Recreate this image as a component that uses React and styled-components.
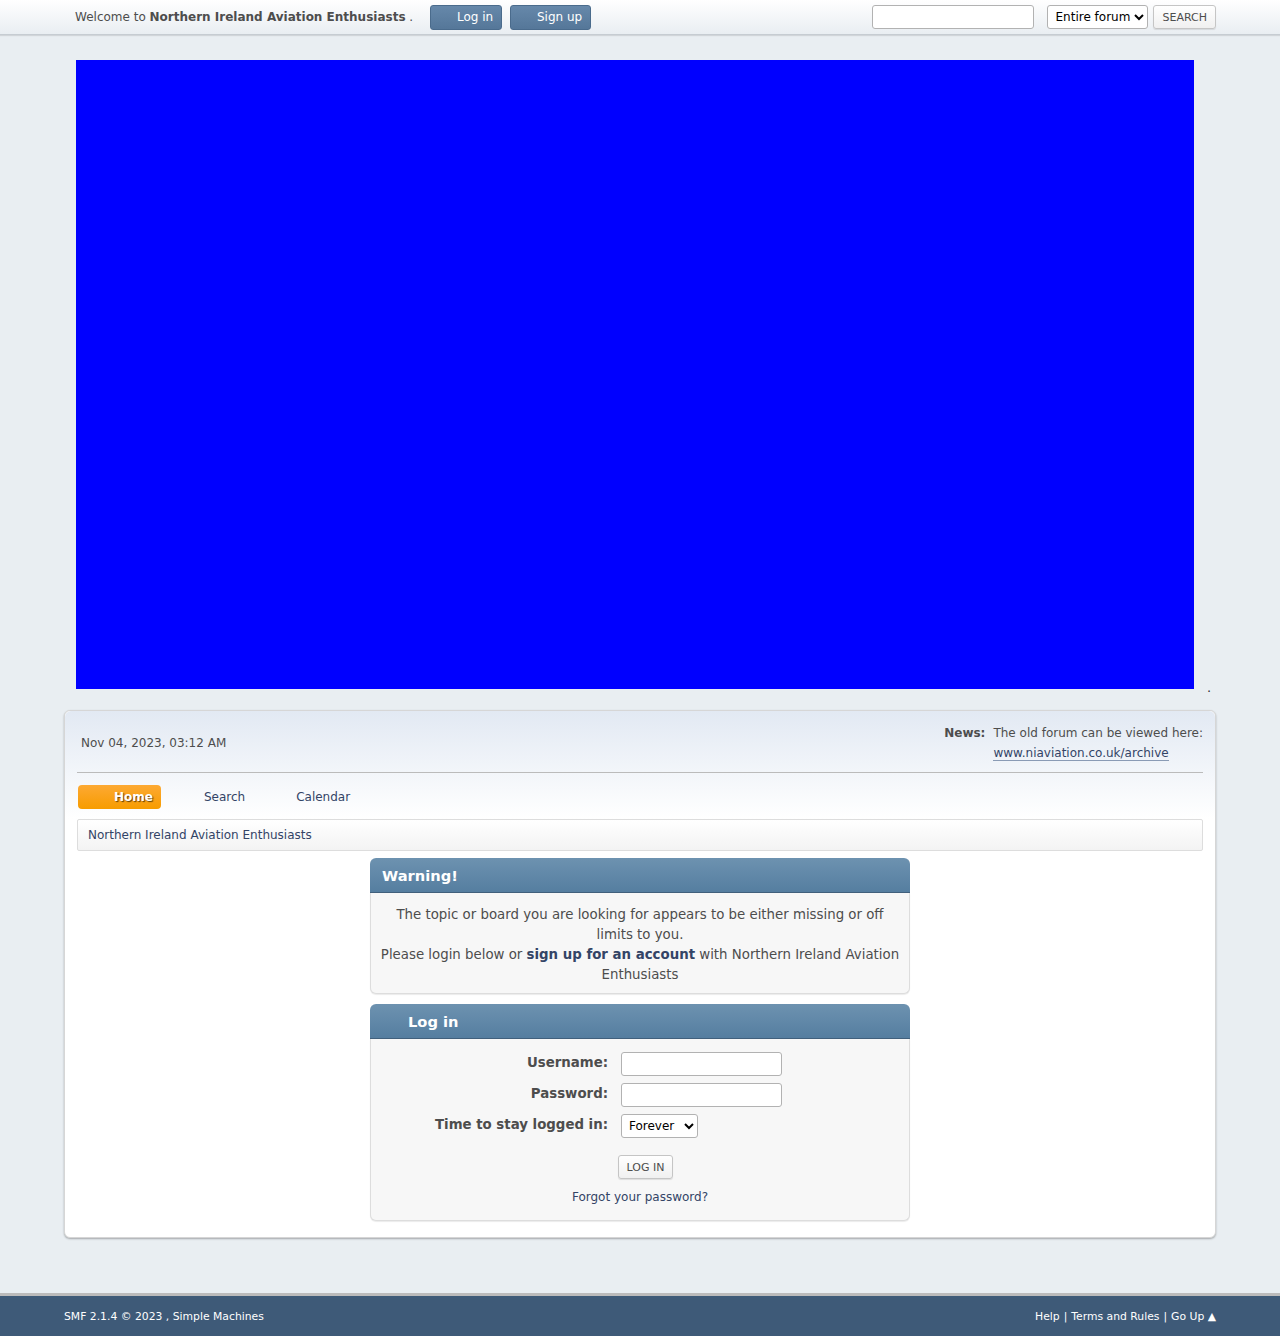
import React from 'react';
import styled, { createGlobalStyle } from 'styled-components';

const GlobalStyle = createGlobalStyle`
  body {
    margin: 0;
    background: #e9eef2;
    font-family: "DejaVu Sans", Verdana, sans-serif;
    font-size: 12px;
    color: #4d4d4d;
  }
  a {
    color: #334466;
    text-decoration: none;
  }
`;

const TopSection = styled.div`
  height: 35px;
  box-sizing: border-box;
  background: linear-gradient(to bottom, #fff 0%, #e9eef2 100%);
  border-bottom: 1px solid #c6ccd2;
  box-shadow: 0 1px 1px rgba(0, 0, 0, 0.1);
`;

const Inner = styled.div`
  width: 1152px;
  margin: 0 auto;
  box-sizing: border-box;
`;

const TopRow = styled(Inner)`
  height: 34px;
  display: flex;
  align-items: center;
  padding-left: 11px;
`;

const Welcome = styled.div`
  color: #4d4d4d;
  font-size: 12px;
  margin-right: 17px;

  b {
    font-weight: bold;
  }
`;

const TopButton = styled.a`
  display: inline-flex;
  align-items: center;
  justify-content: flex-end;
  box-sizing: border-box;
  height: 25px;
  width: ${p => p.$w}px;
  padding-right: 8px;
  margin-right: 8px;
  border: 1px solid #4a6b8c;
  border-radius: 3px;
  background: linear-gradient(to bottom, #6688aa 0%, #557799 100%);
  color: #fff !important;
  font-size: 12px;
`;

const SearchForm = styled.form`
  margin-left: auto;
  display: flex;
  align-items: center;
`;

const TextInput = styled.input`
  box-sizing: border-box;
  width: ${p => p.$w}px;
  height: 24px;
  border: 1px solid #b2b2b2;
  border-radius: 3px;
  background: #fff;
  margin: 0;
  padding: 0 6px;
`;

const Select = styled.select`
  box-sizing: border-box;
  width: ${p => p.$w}px;
  height: 24px;
  margin: 0 0 0 ${p => p.$ml || 0}px;
  border: 1px solid #b2b2b2;
  border-radius: 3px;
  background: #fff;
  font-family: "DejaVu Sans", sans-serif;
  font-size: 12px;
  color: #000;
  padding: 0 0 0 3px;
`;

const PlainButton = styled.button`
  box-sizing: border-box;
  height: 24px;
  margin: ${p => p.$m || 0};
  padding: 0 8px;
  border: 1px solid #c5c5c5;
  border-radius: 3px;
  background: linear-gradient(to bottom, #fff 0%, #f0f0f0 100%);
  box-shadow: 0 1px 1px rgba(0, 0, 0, 0.1);
  font-family: "DejaVu Sans", sans-serif;
  font-size: 11px;
  color: #4d4d4d;
  text-transform: uppercase;
`;

const BannerRow = styled(Inner)`
  display: flex;
  align-items: flex-end;
  padding: 25px 0 0 12px;
  gap: 13px;
`;

const Banner = styled.div`
  width: 1118px;
  height: 629px;
  background: #0000ff;
`;

const Dot = styled.span`
  font-size: 13px;
  line-height: 1;
  color: #333;
  margin-bottom: -5px;
`;

const Wrapper = styled(Inner)`
  margin-top: 21px;
  background: #fff;
  border: 1px solid #d6d6d6;
  border-radius: 6px;
  box-shadow: 0 1px 2px rgba(0, 0, 0, 0.3);
  padding-bottom: 16px;
`;

const UpperSection = styled.div`
  background: linear-gradient(to bottom, #e2e9f3 0%, #fff 100%);
  border-radius: 6px 6px 0 0;
  padding: 12px 12px 0 12px;
`;

const InfoRow = styled.div`
  display: flex;
  justify-content: space-between;
  align-items: center;
  height: 39px;
  padding: 0 0 10px 4px;
  border-bottom: 1px solid #bbb;
`;

const DateText = styled.div`
  font-size: 12px;
`;

const News = styled.div`
  display: flex;
  gap: 8px;
  align-self: flex-start;
  font-size: 12px;
  line-height: 20px;

  b {
    font-weight: bold;
  }
`;

const NewsLink = styled.a`
  border-bottom: 1px solid #8a9bb5;
`;

const Menu = styled.div`
  display: flex;
  align-items: center;
  padding: 12px 0 10px 1px;
`;

const MenuItem = styled.a`
  box-sizing: border-box;
  height: 24px;
  display: inline-flex;
  align-items: center;
  padding: ${p => (p.$active ? '0 8px 0 36px' : '0')};
  margin-right: ${p => p.$gap}px;
  border-radius: 4px;
  font-size: 12px;
  ${p =>
    p.$active
      ? `
    background: linear-gradient(to bottom, #fda933 0%, #f79c00 100%);
    color: #fff !important;
    font-weight: bold;
    text-shadow: 1px 1px 1px rgba(0, 0, 0, 0.6);
  `
      : 'color: #334466;'}
`;

const LinkTree = styled.div`
  margin: 0 12px;
  height: 32px;
  box-sizing: border-box;
  display: flex;
  align-items: center;
  padding-left: 10px;
  border: 1px solid #ddd;
  border-radius: 2px;
  background: linear-gradient(to bottom, #fff 0%, #f3f3f3 100%);
  font-size: 12px;
`;

const Content = styled.div`
  display: flex;
  flex-direction: column;
  align-items: center;
  gap: 10px;
  padding-top: 7px;
`;

const Box = styled.div`
  width: 540px;
`;

const CatHeader = styled.h3`
  margin: 0;
  height: 35px;
  box-sizing: border-box;
  display: flex;
  align-items: center;
  padding-left: ${p => p.$pad}px;
  border-radius: 6px 6px 0 0;
  background: linear-gradient(to bottom, #6d92b0 0%, #557ea0 100%);
  border-bottom: 1px solid #41607c;
  color: #fff;
  font-size: 14.67px;
  font-weight: bold;
`;

const BoxBody = styled.div`
  background: #f7f7f7;
  border: 1px solid #ddd;
  border-top: none;
  border-radius: 0 0 6px 6px;
  box-shadow: 0 1px 1px rgba(0, 0, 0, 0.08);
`;

const WarningBody = styled(BoxBody)`
  text-align: center;
  padding: 12px 8px 8px;
  font-size: 13.33px;
  line-height: 20px;
`;

const Strong = styled.a`
  font-weight: bold;
`;

const LoginBody = styled(BoxBody)`
  padding: 13px 0 16px;
  display: flex;
  flex-direction: column;
  align-items: center;
`;

const FormGrid = styled.div`
  display: grid;
  grid-template-columns: 237px 1fr;
  column-gap: 13px;
  row-gap: 7px;
  align-self: stretch;
  align-items: center;
`;

const Label = styled.label`
  text-align: right;
  font-weight: bold;
  font-size: 13.33px;
  color: #4d4d4d;
  margin-top: -4px;
`;

const FieldCell = styled.div`
  display: flex;
`;

const ForgotLink = styled.a`
  margin-top: 11px;
  font-size: 12px;
`;

const Footer = styled.div`
  margin-top: 55px;
  border-top: 3px solid #bbb;
  background: #3e5a78;
  height: 40px;
`;

const FooterRow = styled(Inner)`
  height: 40px;
  display: flex;
  align-items: center;
  justify-content: space-between;
  font-size: 10.8px;
  color: #fff;

  a {
    color: #fff;
  }
`;

const Sep = styled.span`
  margin: 0 4px;
`;

export default function App() {
  return (
    <>
      <GlobalStyle />
      <TopSection>
        <TopRow>
          <Welcome>
            Welcome to <b>Northern Ireland Aviation Enthusiasts</b> .
          </Welcome>
          <TopButton $w={72}>Log in</TopButton>
          <TopButton $w={81}>Sign up</TopButton>
          <SearchForm>
            <TextInput $w={162} />
            <Select $w={101} $ml={13}>
              <option>Entire forum</option>
            </Select>
            <PlainButton type="button" $m="0 0 0 5px">Search</PlainButton>
          </SearchForm>
        </TopRow>
      </TopSection>

      <BannerRow>
        <Banner />
        <Dot>.</Dot>
      </BannerRow>

      <Wrapper>
        <UpperSection>
          <InfoRow>
            <DateText>Nov 04, 2023, 03:12 AM</DateText>
            <News>
              <b>News:</b>
              <div>
                The old forum can be viewed here:
                <br />
                <NewsLink>www.niaviation.co.uk/archive</NewsLink>
              </div>
            </News>
          </InfoRow>
          <Menu>
            <MenuItem $active $gap={43}>Home</MenuItem>
            <MenuItem $gap={51}>Search</MenuItem>
            <MenuItem $gap={0}>Calendar</MenuItem>
          </Menu>
        </UpperSection>
        <LinkTree>
          <a>Northern Ireland Aviation Enthusiasts</a>
        </LinkTree>
        <Content>
          <Box>
            <CatHeader $pad={12}>Warning!</CatHeader>
            <WarningBody>
              The topic or board you are looking for appears to be either missing or off limits to you.
              <br />
              Please login below or <Strong>sign up for an account</Strong> with Northern Ireland Aviation
              Enthusiasts
            </WarningBody>
          </Box>
          <Box>
            <CatHeader $pad={38}>Log in</CatHeader>
            <LoginBody>
              <FormGrid>
                <Label>Username:</Label>
                <FieldCell>
                  <TextInput $w={161} />
                </FieldCell>
                <Label>Password:</Label>
                <FieldCell>
                  <TextInput $w={161} type="password" />
                </FieldCell>
                <Label>Time to stay logged in:</Label>
                <FieldCell>
                  <Select $w={77}>
                    <option>Forever</option>
                  </Select>
                </FieldCell>
              </FormGrid>
              <PlainButton type="button" $m="17px 0 0 11px">Log in</PlainButton>
              <ForgotLink>Forgot your password?</ForgotLink>
            </LoginBody>
          </Box>
        </Content>
      </Wrapper>

      <Footer>
        <FooterRow>
          <div>
            <a>SMF 2.1.4 © 2023</a> , <a>Simple Machines</a>
          </div>
          <div>
            <a>Help</a>
            <Sep>|</Sep>
            <a>Terms and Rules</a>
            <Sep>|</Sep>
            <a>Go Up ▲</a>
          </div>
        </FooterRow>
      </Footer>
    </>
  );
}
